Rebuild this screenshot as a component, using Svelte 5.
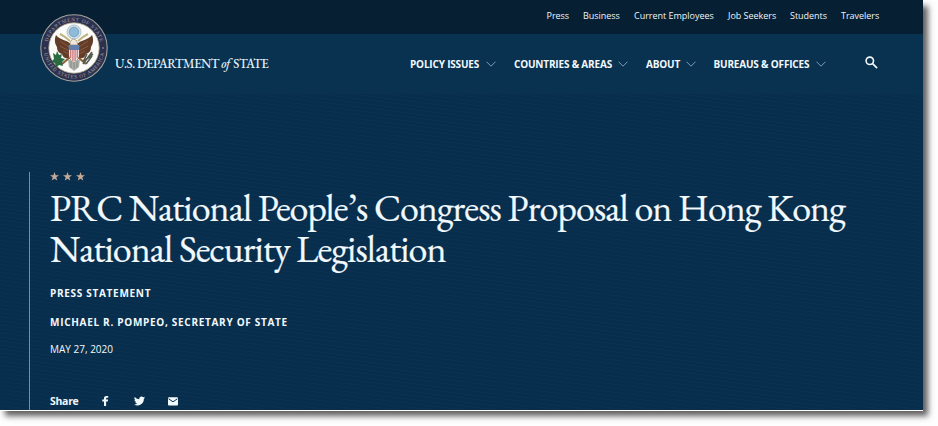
<script>
  const utility = [
    { label: 'Press', width: 22.5 },
    { label: 'Business', width: 37 },
    { label: 'Current Employees', width: 80 },
    { label: 'Job Seekers', width: 48 },
    { label: 'Students', width: 37 },
    { label: 'Travelers', width: 39 },
  ];
  const menu = [
    { label: 'POLICY ISSUES', width: 70 },
    { label: 'COUNTRIES & AREAS', width: 98 },
    { label: 'ABOUT', width: 33.5 },
    { label: 'BUREAUS & OFFICES', width: 96.5 },
  ];
  const star = 'M5 0 6.25 3.5 10 3.6 7 5.9 8.1 9.5 5 7.4 1.9 9.5 3 5.9 0 3.6 3.75 3.5Z';
</script>

<div class="canvas">
<div class="page">
  <header>
    <nav class="utility" aria-label="Audience">
      {#each utility as item}
        <a href="#top" style="width:{item.width}px">{item.label}</a>
      {/each}
    </nav>
    <div class="bar">
      <a class="brand" href="#top">
        <svg class="seal" viewBox="0 0 68 68" width="68" height="68" aria-label="Seal">
          <defs>
            <path id="arcTop" d="M7.2 34a26.8 26.8 0 0 1 53.6 0" />
            <path id="arcBottom" d="M3.6 34a30.4 30.4 0 0 0 60.8 0" />
          </defs>
          <circle cx="34" cy="34" r="33.2" fill="#2c3150" stroke="#a3a39c" stroke-width="1.1" />
          <circle cx="34" cy="34" r="25.2" fill="#fbfcfa" stroke="#b5aa91" stroke-width=".8" />
          <g class="ring">
            <text><textPath href="#arcTop" startOffset="50%" textLength="71" lengthAdjust="spacing">DEPARTMENT OF STATE</textPath></text>
            <text><textPath href="#arcBottom" startOffset="50%" textLength="85" lengthAdjust="spacing">UNITED STATES OF AMERICA</textPath></text>
          </g>
          <circle cx="5" cy="34" r=".8" fill="#c1ab88" /><circle cx="63" cy="34" r=".8" fill="#c1ab88" />
          <circle cx="34" cy="18" r="7" fill="#d5e2e6" stroke="#a2b6bd" stroke-width=".8" />
          <circle cx="34" cy="18" r="4.8" fill="#91b9d8" stroke="#6397bf" stroke-width=".7" />
          <path d="M20 20q6 3 10 7M48 20q-6 3-10 7" fill="none" stroke="#c3b37f" stroke-width="2" />
          <path d="M31 30C27 26 20 26 16 21c-2 5-1 9 1 12 0 4 2 6 5 7 1 4 4 5 6 4l3 2zM37 30c4-4 11-4 15-9 2 5 1 9-1 12 0 4-2 6-5 7-1 4-4 5-6 4l-3 2z" fill="#643d29" />
          <path d="M20 27l9 6M20 32l9 5M23 37l6 3M48 27l-9 6M48 32l-9 5M45 37l-6 3" stroke="#94694c" stroke-width=".7" />
          <path d="M30 31q0-6 4-6 3 0 4 6z" fill="#eee9da" stroke="#8f7355" stroke-width=".6" />
          <path d="M29 44l-7 6M39 44l7 6" stroke="#8e6336" stroke-width="2.2" />
          <path d="M28 46h12l-1 7-5 4-5-4z" fill="#aeb0aa" /><path d="M31 47v7m3-7v8m3-8v7" stroke="#777a73" stroke-width=".7" />
          <path d="M29 34h10v8q-1 4-5 6-4-2-5-6z" fill="#f0dfdc" />
          <path d="M30.7 34v10m2.2-10v13m2.2-13v13m2.2-13v10" stroke="#c97379" stroke-width="1.2" />
          <path d="M28.7 31h10.6v5H28.7z" fill="#637eaa" />
          <path d="M13 39l3 2 1-4 2 4 3-1-1 4 4 1-3 3 1 4-4-1-3 3-1-5-4-1 3-3z" fill="#2b6b42" />
          <path d="M43 50l9-12M44 47l9-7M46 50l6-8M43 48l4-8" stroke="#565a50" stroke-width="1.6" />
        </svg>
        <span class="wordmark">U.S. DEPARTMENT <i>of</i> STATE</span>
      </a>
      <nav class="menu" aria-label="Main">
        {#each menu as item}
          <a href="#top">
            <span style="width:{item.width}px">{item.label}</span>
            <svg width="10" height="6" viewBox="0 0 10 6"><path d="M.5.7 5 5.2 9.5.7" /></svg>
          </a>
        {/each}
      </nav>
      <svg class="search" width="13" height="13" viewBox="0 0 13 13" aria-label="Search">
        <circle cx="4.8" cy="4.8" r="3.7" /><path d="m7.6 7.6 4.5 4.5" />
      </svg>
    </div>
  </header>

  <main>
    <div class="stars">
      {#each [1, 2, 3] as _}
        <svg width="9" height="9" viewBox="0 0 10 10"><path d={star} /></svg>
      {/each}
    </div>
    <h1>
      <span>PRC National People’s Congress Proposal on Hong Kong</span>
      <span>National Security Legislation</span>
    </h1>
    <p class="kind">PRESS STATEMENT</p>
    <p class="author">MICHAEL R. POMPEO, SECRETARY OF STATE</p>
    <p class="date">MAY 27, 2020</p>
    <div class="share">
      <b>Share</b>
      <svg class="fb" width="7" height="10" viewBox="0 0 7 10"><path d="M2 10V5.4H.3V3.6H2V2.3C2 .8 2.9 0 4.4 0h1.8v1.7H5c-.7 0-.9.3-.9.9v1h2L5.8 5.4H4.1V10z" /></svg>
      <svg class="tw" width="11" height="10" viewBox="0 0 24 20"><path d="M24 2.4a10 10 0 0 1-2.8.8A5 5 0 0 0 23.3.5a10 10 0 0 1-3.1 1.2 4.9 4.9 0 0 0-8.4 4.5A14 14 0 0 1 1.7 1a4.9 4.9 0 0 0 1.5 6.6A5 5 0 0 1 1 7a4.9 4.9 0 0 0 3.9 4.9 5 5 0 0 1-2.2.1 4.9 4.9 0 0 0 4.6 3.4A10 10 0 0 1 0 17.5 14 14 0 0 0 21.5 5 10 10 0 0 0 24 2.4z" /></svg>
      <svg class="mail" width="10" height="9" viewBox="0 0 10 9"><rect y=".3" width="10" height="8.2" rx=".9" /><path d="m.6 1.8 4.4 3 4.4-3" /></svg>
    </div>
  </main>
</div>
</div>

<style>
  :global(body) { background: #fefefe; }
  .canvas { width: 938px; height: 426px; overflow: hidden; background: #fefefe; }
  .page {
    width: 923px; height: 410px; box-sizing: border-box;
    display: flex; flex-direction: column;
    background: repeating-linear-gradient(7deg, #ffffff03 0 1px, transparent 1px 4px), #082e4e;
    color: #f2f9fc; font-family: "Open Sans", sans-serif;
    box-shadow: 0 1px 0 #fff, 5px 6px 6px #000000a0;
  }
  a { color: inherit; text-decoration: none; }
  header { flex: none; height: 94px; }
  .utility {
    height: 34px; box-sizing: border-box; padding: 0 43px 2px 0; background: #061f33;
    display: flex; align-items: center; justify-content: flex-end; gap: 14px;
    font-size: 9px; line-height: 16px; color: #edf4f9; white-space: nowrap; letter-spacing: -.02px;
  }
  .bar { height: 60px; background: #093150; display: flex; }
  .brand { display: flex; margin-left: 40px; width: 370px; }
  .seal { flex: none; margin-top: -20px; }
  .ring { fill: #aaa4a0; font: 5.1px "Liberation Serif", serif; text-anchor: middle; }
  .wordmark {
    margin: 20px 0 0 7px; white-space: nowrap; color: #e4f2fa;
    font: 500 12.8px/19px "EB Garamond", "Liberation Serif", serif; letter-spacing: -.46px;
  }
  .wordmark i { margin-right: 1px; }
  .menu { display: flex; gap: 18px; height: 60px; align-items: center; font-size: 10px; font-weight: 700; letter-spacing: -.18px; white-space: nowrap; }
  .menu a { display: flex; align-items: center; gap: 6px; }
  .menu svg { fill: none; stroke: #7f9db5; stroke-width: 1; }
  .search { margin: 22px 0 0 38.5px; fill: none; stroke: #f2f9fc; stroke-width: 1.6; }
  main { margin: 78px 0 0 29px; padding-left: 20px; border-left: 1px solid #858a8d; flex: 1; min-height: 0; }
  .stars { display: flex; gap: 4px; height: 9px; }
  .stars svg { fill: #c5aa98; }
  h1 { margin: 6px 0 0; font: 400 38px/41px "EB Garamond", "Liberation Serif", serif; letter-spacing: -.93px; white-space: nowrap; -webkit-text-stroke: .2px #f2f9fc; }
  h1 span { display: block; }
  p { margin: 0; font-size: 10px; line-height: 14px; white-space: nowrap; }
  .kind { margin-top: 17px; font-weight: 700; letter-spacing: .7px; }
  .author { margin-top: 15px; font-weight: 700; letter-spacing: .7px; }
  .date { margin-top: 13px; }
  .share { margin-top: 38px; display: flex; align-items: center; font-size: 10.5px; letter-spacing: -.3px; line-height: 14px; }
  .share b { width: 52px; }
  .share svg { fill: #f2f9fc; }
  .tw { margin-left: 25px; }
  .mail { margin-left: 23px; }
  .mail path { fill: none; stroke: #092e50; }
</style>
